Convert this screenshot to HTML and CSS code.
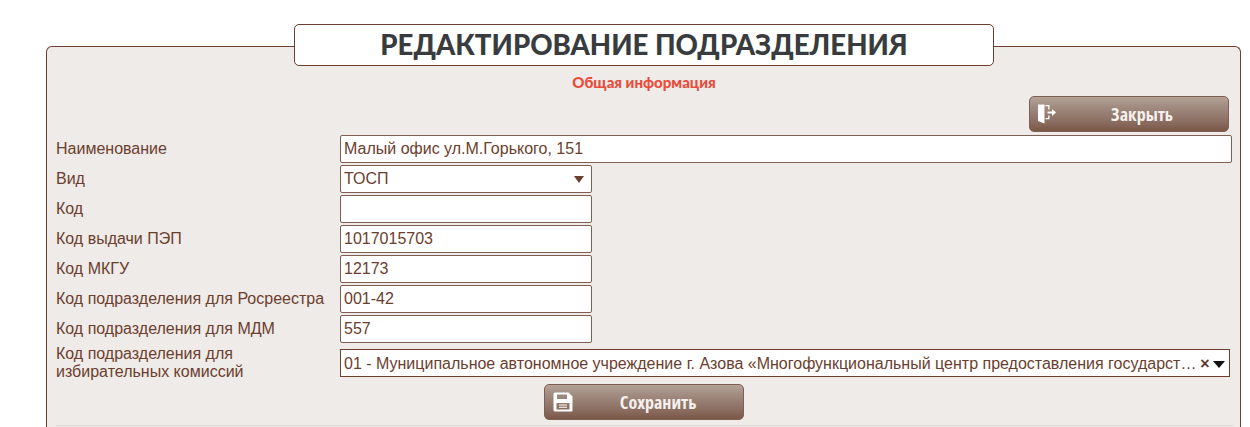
FILE: index.html
```html
<!DOCTYPE html>
<html lang="ru">
<head>
<meta charset="utf-8">
<title>Редактирование подразделения</title>
<link rel="stylesheet" href="styles.css">
</head>
<body>
<div class="page">
  <section class="panel">
    <h1 class="title">РЕДАКТИРОВАНИЕ ПОДРАЗДЕЛЕНИЯ</h1>
    <h2 class="subtitle">Общая информация</h2>
    <div class="actions">
      <button class="btn" type="button">
        <svg class="btn-icon" width="18" height="20" viewBox="0 0 18 20"><path d="M0 0.500h6.500v19l-6.500-2.500z" fill="#fff"/><path d="M7.500 1h4v4.500h-1.300v-3.200h-2.700zM7.500 14h2.700v-2.500h1.300v3.800h-4z" fill="#fff"/><path d="M9.500 7.500h4.500v-2.500l4 3.500-4 3.500v-2.500h-4.500z" fill="#fff"/></svg>
        <span class="btn-label">Закрыть</span>
      </button>
    </div>
    <form class="form">
      <label class="row"><span class="label">Наименование</span><input class="field field-wide" value="Малый офис ул.М.Горького, 151"></label>
      <div class="row"><span class="label">Вид</span><div class="field field-select"><span>ТОСП</span><i class="caret"></i></div></div>
      <label class="row"><span class="label">Код</span><input class="field" value=""></label>
      <label class="row"><span class="label">Код выдачи ПЭП</span><input class="field" value="1017015703"></label>
      <label class="row"><span class="label">Код МКГУ</span><input class="field" value="12173"></label>
      <label class="row"><span class="label">Код подразделения для Росреестра</span><input class="field" value="001-42"></label>
      <label class="row"><span class="label">Код подразделения для МДМ</span><input class="field" value="557"></label>
      <div class="row row-tall"><span class="label">Код подразделения для<br>избирательных комиссий</span>
        <div class="combo"><span class="combo-text">01 - Муниципальное автономное учреждение г. Азова «Многофункциональный центр предоставления государственных и муниципальных услуг»</span><span class="combo-x">×</span><i class="combo-caret"></i></div>
      </div>
      <div class="save-row">
        <button class="btn" type="button">
          <svg class="btn-icon" width="20" height="20" viewBox="0 0 20 20"><path fill-rule="evenodd" d="M2 0.500h13.500l4 4v14a1 1 0 0 1-1 1H2a1.500 1.500 0 0 1-1.500-1.500V2A1.500 1.500 0 0 1 2 0.500zM4 2.500v4.500h10v-4.500zM3.500 11v6.500h13v-6.500zM6 12.500h8v1H6zM6 14.800h8v1H6z" fill="#fff"/></svg>
          <span class="btn-label">Сохранить</span>
        </button>
      </div>
      <div class="divider"></div>
    </form>
  </section>
</div>
</body>
</html>
```
FILE: styles.css
```css
* { box-sizing: border-box; }
html, body { margin: 0; background: #fff; height: 100%; overflow: hidden; }
body { font-family: "Liberation Sans", Arial, sans-serif; color: #6b3e2e; }
.page { padding: 24px 9px 0 46px; }
.panel {
  margin-top: 22px;
  height: 400px;
  background: #efebe8;
  border: 1px solid #6b3e2e;
  border-bottom: 0;
  border-radius: 6px 6px 0 0;
  padding: 0 8px 0 9px;
}
.title {
  width: 700px;
  height: 42px;
  margin: -23px auto 0;
  background: #fff;
  border: 1px solid #6b3e2e;
  border-radius: 5px;
  color: #383c3e;
  font: 900 27.600px/40px Lato, sans-serif;
  text-align: center;
}
.subtitle {
  margin: 7px 0 0;
  color: #e74c3c;
  font: 900 15px/18px Lato, sans-serif;
  text-align: center;
}
.actions { display: flex; justify-content: flex-end; padding: 5px 3px 0 0; }
.btn {
  display: flex;
  align-items: center;
  width: 200px;
  height: 36px;
  padding: 0 8px;
  border: 1px solid #7f5f52;
  border-radius: 5px;
  background: linear-gradient(#b6a398 0, #a38e83 25%, #8a6c5f 75%, #7a5748 100%);
  cursor: pointer;
}
.btn-icon { flex: none; }
.btn-label {
  flex: 1;
  padding-left: 8px;
  color: #f4f0ee;
  font: 700 18px/34px "Open Sans", sans-serif;
  font-stretch: 75%;
  text-align: center;
}
.form { margin-top: 2px; }
.row { display: flex; align-items: center; height: 30px; }
.row-tall { height: 38px; }
.label {
  flex: none;
  width: 284px;
  font-size: 16px;
  line-height: 18px;
  color: #6b3e2e;
}
.field {
  display: block;
  width: 252px;
  height: 28px;
  padding: 0 3px;
  background: #fff;
  border: 1px solid #7f5f52;
  border-radius: 2px;
  color: #6b3e2e;
  font: 16px/26px "Liberation Sans", Arial, sans-serif;
  outline: 0;
}
.field-wide { width: 892px; }
.field-select { display: flex; align-items: center; justify-content: space-between; padding-right: 7px; }
.caret {
  width: 0; height: 0;
  border-left: 5px solid transparent;
  border-right: 5px solid transparent;
  border-top: 7px solid #6b3e2e;
}
.combo {
  display: flex;
  align-items: center;
  width: 890px;
  height: 28px;
  padding: 2px 3px 0;
  background: #fff;
  border: 1px solid #6b3e2e;
  font-size: 16px;
  line-height: 24px;
  color: #6b3e2e;
}
.combo-text { flex: 1; min-width: 0; white-space: nowrap; overflow: hidden; text-overflow: ellipsis; }
.combo-x { flex: none; width: 10px; margin-left: 2px; color: #5c3a2e; font-weight: 700; text-align: center; }
.combo-caret {
  flex: none;
  margin: 0 1px 0 3px;
  width: 0; height: 0;
  border-left: 6px solid transparent;
  border-right: 6px solid transparent;
  border-top: 7px solid #111;
}
.save-row { display: flex; justify-content: center; padding: 2px 0 0 0; }
.divider { margin: 5px 0 0 0; height: 1px; background: #dcd8d5; width: 1177px; }
```
